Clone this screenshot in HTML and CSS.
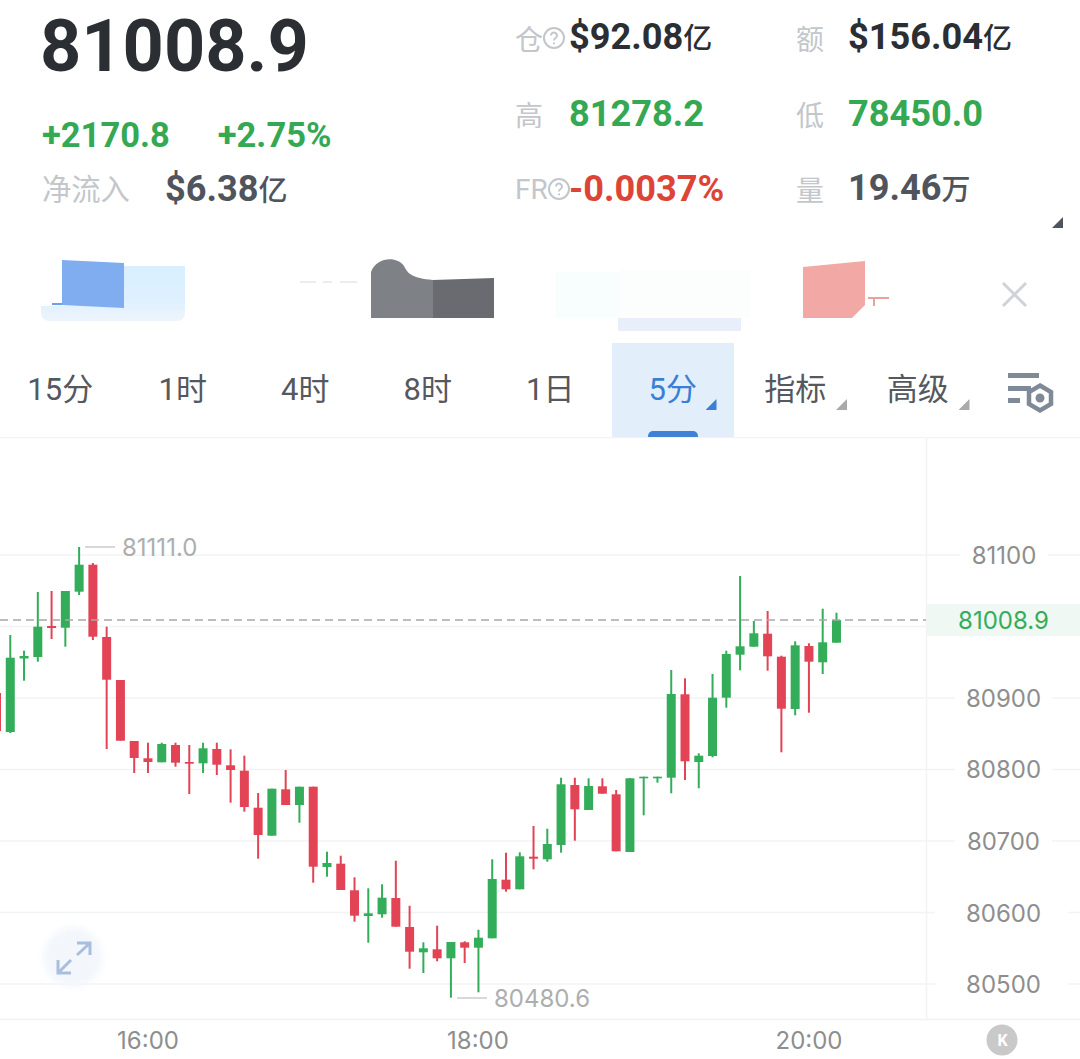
FILE: index.html
```html
<!DOCTYPE html>
<html lang="zh-CN">
<head>
    <meta charset="UTF-8">
    <meta name="viewport" content="width=device-width, initial-scale=1.0">
    <title>81008.9</title>
    <link rel="stylesheet" href="styles.css">
</head>
<body>

<div class="page">
    <div class="header">
        <div class="summary">
            <div class="price">81008.9</div>
            <div class="change">
                <span>+2170.8</span>
                <span>+2.75%</span>
            </div>
            <div class="inflow">
                <span class="label">净流入</span>
                <span class="value dark">$6.38<span class="unit">亿</span></span>
            </div>
        </div>
        <div class="stats">
            <div class="stat">
                <span class="label">仓<svg class="help" viewBox="0 0 24 24"><circle cx="12" cy="12" r="10"/><path d="M9 9.5a3 3 0 1 1 4.6 2.5c-1 .7-1.6 1.2-1.6 2.4"/><path d="M12 16.4v1.8"/></svg></span>
                <span class="value black">$92.08<span class="unit">亿</span></span>
            </div>
            <div class="stat wide">
                <span class="label">额</span>
                <span class="value black">$156.04<span class="unit">亿</span></span>
            </div>
            <div class="stat">
                <span class="label">高</span>
                <span class="value green">81278.2</span>
            </div>
            <div class="stat wide">
                <span class="label">低</span>
                <span class="value green">78450.0</span>
            </div>
            <div class="stat">
                <span class="label latin">FR<svg class="help" viewBox="0 0 24 24"><circle cx="12" cy="12" r="10"/><path d="M9 9.5a3 3 0 1 1 4.6 2.5c-1 .7-1.6 1.2-1.6 2.4"/><path d="M12 16.4v1.8"/></svg></span>
                <span class="value red">-0.0037%</span>
            </div>
            <div class="stat wide">
                <span class="label">量</span>
                <span class="value dark">19.46<span class="unit">万</span></span>
            </div>
        </div>
        <span class="corner"></span>
    </div>

    <svg class="banner" viewBox="0 254 1080 89">
        <defs>
            <linearGradient id="paleBlue" x1="0" y1="0" x2="0" y2="1">
                <stop offset="0" stop-color="#d9efff"/>
                <stop offset="0.6" stop-color="#ddf0fe"/>
                <stop offset="1" stop-color="#eef5fc"/>
            </linearGradient>
        </defs>
        <path d="M124 266H185V312Q185 321 176 321H50Q41 321 41 312V306L124 304Z" fill="url(#paleBlue)"/>
        <path d="M62 260L124 263V308L62 305Z" fill="#7fadf0"/>
        <path d="M52 304H62" stroke="#6f9fe6" stroke-width="2"/>
        <path d="M300 282H316M323 282H332M340 282H357" stroke="#ececec" stroke-width="2"/>
        <path d="M371 318V272C376 258 396 255 404 266C408 274 412 278 433 280V318Z" fill="#7e8186"/>
        <path d="M433 280L494 278V318H433Z" fill="#696b71"/>
        <rect x="555" y="272" width="65" height="46" fill="#f8fdfe"/>
        <rect x="620" y="270" width="130" height="48" fill="#fcfefe"/>
        <rect x="618" y="318" width="123" height="13" fill="#e8effb"/>
        <path d="M803 267L865 261V305L852 318H803Z" fill="#f2a8a5"/>
        <path d="M868 298H889M874 298V306" stroke="#e9a29e" stroke-width="2"/>
        <path d="M1003 283L1026 306M1026 283L1003 306" stroke="#cfd2d6" stroke-width="3"/>
    </svg>

    <div class="tabs">
        <div class="tab">15分</div>
        <div class="tab">1时</div>
        <div class="tab">4时</div>
        <div class="tab">8时</div>
        <div class="tab">1日</div>
        <div class="tab active">5分<span class="mark"></span></div>
        <div class="tab">指标<span class="mark"></span></div>
        <div class="tab">高级<span class="mark"></span></div>
        <div class="tab-icon">
            <svg viewBox="0 0 48 42" width="48" height="42">
                <path d="M0 2.5H31M0 15.5H23M0 27.5H12" stroke="#7f8a99" stroke-width="5"/>
                <path d="M32 12.5L43 19V31L32 37.5L21 31V19Z" fill="none" stroke="#7f8a99" stroke-width="4.5"/>
                <circle cx="32" cy="25" r="4.5" fill="#7f8a99"/>
            </svg>
        </div>
    </div>

    <svg class="chart" id="chart" viewBox="0 437 1080 622">
        <g stroke="#f2f3f5" stroke-width="1.5">
            <path d="M0 437.5H1080"/>
            <path d="M926.5 437V1020"/>
            <path d="M0 1019.5H1080"/>
            <path d="M0 555H960M1048 555H1080"/>
            <path d="M0 626.5H926"/>
            <path d="M0 698H955M1052 698H1080"/>
            <path d="M0 769.5H955M1052 769.5H1080"/>
            <path d="M0 841H955M1052 841H1080"/>
            <path d="M0 912.5H935M1068 912.5H1080"/>
            <path d="M0 984H935M1068 984H1080"/>
        </g>

        <g id="candles"></g>

        <path d="M0 620H926" stroke="#a8a8a8" stroke-width="1.5" stroke-dasharray="8 5"/>

        <path d="M85 547H115M457 998H487" stroke="#cccccc" stroke-width="1.5"/>
        <text class="mark-label" x="122" y="556">81111.0</text>
        <text class="mark-label" x="494" y="1007">80480.6</text>

        <rect x="927" y="604" width="153" height="32" fill="#eff8f2"/>
        <text class="tag-label" x="1003.5" y="629">81008.9</text>

        <g class="axis-y">
            <text x="1004" y="564">81100</text>
            <text x="1003.5" y="707">80900</text>
            <text x="1003.5" y="778">80800</text>
            <text x="1003.5" y="850">80700</text>
            <text x="1003.5" y="922">80600</text>
            <text x="1003.5" y="993">80500</text>
        </g>
        <g class="axis-x">
            <text x="148" y="1049">16:00</text>
            <text x="478" y="1049">18:00</text>
            <text x="809" y="1049">20:00</text>
        </g>

        <circle class="expand-bg" cx="73" cy="957" r="30"/>
        <path d="M77 955L90 943M77 943H90V955M71 960L58 973M58 960V973H71" fill="none" stroke="#a9bedd" stroke-width="3"/>

        <circle cx="1002" cy="1040" r="15.5" fill="#c9c9c9"/>
        <text class="k-label" x="1002.5" y="1046">K</text>
    </svg>
</div>

<script src="chart.js"></script>

</body>
</html>
```

FILE: styles.css
```css
html, body {
    margin: 0;
    background: #fff;
}
.page {
    width: 1080px;
    height: 1059px;
    overflow: hidden;
    font-family: Roboto, "Noto Sans CJK SC", sans-serif;
}
.header {
    position: relative;
    display: flex;
    height: 254px;
}
.summary {
    width: 474px;
    padding: 10px 0 0 42px;
    margin-right: -1px;
}
.price {
    margin-left: -2px;
    font-size: 72px;
    line-height: 74px;
    font-weight: 700;
    color: #2b2e33;
}
.change {
    display: flex;
    gap: 48px;
    margin-top: 31px;
    font-size: 34.5px;
    line-height: 40px;
    font-weight: 700;
    color: #34a853;
}
.inflow {
    display: flex;
    gap: 35px;
    margin-top: 14px;
    line-height: 40px;
}
.inflow .label {
    width: 88px;
    font-size: 29.3px;
}
.stats {
    display: grid;
    grid-template-columns: 281px auto;
    grid-auto-rows: 40px;
    row-gap: 35.5px;
    padding-top: 18px;
}
.stat {
    display: flex;
    align-items: center;
}
.label {
    display: flex;
    align-items: center;
    width: 54px;
    font-size: 28px;
    color: #c3c6ca;
    white-space: nowrap;
}
.stat.wide .label {
    width: 52px;
}
.label.latin {
    font-size: 28px;
}
.help {
    flex: none;
    width: 24px;
    height: 24px;
    margin-left: -1px;
    fill: none;
    stroke: #c3c6ca;
    stroke-width: 2;
}
.value {
    font-size: 36.2px;
    line-height: 40px;
    font-weight: 700;
    white-space: nowrap;
}
.unit {
    font-size: 29px;
    font-weight: 500;
}
.black { color: #2b2e33; }
.dark { color: #50545c; }
.green { color: #34a853; }
.red { color: #dd4438; }
.corner {
    position: absolute;
    left: 1052px;
    top: 217px;
    width: 11px;
    height: 11px;
    background: #50545c;
    clip-path: polygon(100% 0, 100% 100%, 0 100%);
}
.banner {
    display: block;
    width: 1080px;
    height: 89px;
}
.tabs {
    display: flex;
    height: 94px;
    margin-left: -1px;
}
.tab {
    position: relative;
    width: 122.5px;
    font-size: 31px;
    line-height: 94px;
    text-align: center;
    color: #55585e;
}
.tab .mark {
    position: absolute;
    left: 102px;
    top: 56px;
    width: 11px;
    height: 11px;
    background: #a9a9a9;
    clip-path: polygon(100% 0, 100% 100%, 0 100%);
}
.tab.active {
    background: #e3eefb;
    color: #3a7fd5;
}
.tab.active .mark {
    left: 94px;
    background: #3a7fd5;
}
.tab.active::after {
    content: "";
    position: absolute;
    left: 36px;
    bottom: 0;
    width: 50px;
    height: 6px;
    border-radius: 5px 5px 0 0;
    background: #3f80d8;
}
.tab-icon {
    padding: 30px 0 0 29px;
}
.tab-icon svg {
    display: block;
}
.chart {
    display: block;
    width: 1080px;
    height: 622px;
}
.chart text {
    font-family: Inter, sans-serif;
    font-size: 24px;
}
.axis-y text, .axis-x text {
    fill: #8e8e8e;
    text-anchor: middle;
}
.mark-label {
    fill: #aeaeae;
}
.chart .tag-label {
    fill: #34ad5a;
    text-anchor: middle;
}
.chart .k-label {
    font-family: Roboto, sans-serif;
    font-size: 16px;
    font-weight: 700;
    fill: #fff;
    text-anchor: middle;
}
.expand-bg {
    fill: #f3f7fc;
    filter: blur(3px);
}
```

FILE: chart.js
```js
// each candle: [up, high, bodyTop, bodyBottom, low], y in page pixels
const G = 1, R = 0;
const data = [
    [R, 693, 693, 731, 731],
    [G, 635, 657.7, 732, 733],
    [G, 650.7, 656, 658.5, 680.7],
    [G, 592, 626.7, 657, 661.7],
    [R, 591, 626, 628, 639],
    [G, 591, 591, 627.7, 646.7],
    [G, 547, 564.7, 591.7, 595],
    [R, 563, 564.7, 636.7, 640],
    [R, 626.7, 637, 679.7, 749],
    [R, 680, 680, 740.7, 740.7],
    [R, 741, 741, 758, 773],
    [R, 742.7, 758.3, 762, 773],
    [G, 742.7, 744, 762.3, 762.3],
    [R, 742.7, 745, 762.7, 766.7],
    [R, 745, 762, 763.7, 794],
    [G, 742.7, 748.3, 763.3, 773],
    [R, 742.7, 749, 764.7, 775],
    [R, 749.3, 765.3, 770, 802.7],
    [R, 755.7, 770.7, 807, 811.7],
    [R, 793, 807.7, 835, 858.7],
    [G, 788.7, 788.7, 835.7, 835.7],
    [R, 770, 789.3, 805, 805],
    [G, 786.7, 786.7, 805, 822.7],
    [R, 786.7, 786.7, 866.7, 882.7],
    [G, 851.7, 863, 867, 876.7],
    [R, 855.7, 863.7, 890, 890],
    [R, 877.3, 890.3, 915.7, 921.7],
    [G, 888.3, 913.3, 916, 942.7],
    [G, 884.3, 897.7, 914.3, 917.7],
    [R, 860.7, 898, 926.7, 926.7],
    [R, 905.7, 927, 951.7, 968.7],
    [G, 942.3, 948.3, 952.3, 973],
    [R, 925.7, 949.3, 958.3, 961.3],
    [G, 942, 942, 958.3, 997.7],
    [R, 941.3, 942.3, 947.7, 963],
    [G, 929.7, 937.7, 947.7, 992.3],
    [G, 859.3, 879, 938.3, 938.3],
    [R, 852.7, 879.7, 889.3, 891.7],
    [G, 852.3, 856.3, 889.3, 889.3],
    [R, 826, 856.7, 858.7, 869.3],
    [G, 828.7, 844, 859.3, 861.7],
    [G, 777.7, 784.3, 845, 852.7],
    [R, 777.7, 785, 809.3, 840.7],
    [G, 778.3, 786, 810, 810],
    [R, 778.3, 786.3, 793.7, 793.7],
    [R, 790, 794.3, 851.3, 851.3],
    [G, 778, 778.3, 852, 852],
    [G, 776.7, 776.7, 778.3, 815.3],
    [G, 776.7, 776.7, 778.3, 782.7],
    [G, 670, 694, 777.7, 793.3],
    [R, 678.3, 694.3, 761.3, 780],
    [G, 753.3, 755.7, 762, 788.3],
    [G, 674, 697.7, 756, 757.3],
    [G, 650.7, 654, 697.7, 707.7],
    [G, 576, 646.3, 654.7, 670.3],
    [G, 621, 633.3, 646.7, 646.7],
    [R, 611, 633.7, 656.3, 670.7],
    [R, 655.7, 656.7, 708.7, 752.3],
    [G, 641.3, 645.3, 709, 715.3],
    [R, 643.3, 646, 661.7, 712.7],
    [G, 608.7, 642.3, 662.3, 674],
    [G, 612.7, 620, 642.7, 642.7]
];

const NS = 'http://www.w3.org/2000/svg';
const group = document.getElementById('candles');

function addRect(x, y, w, h, color) {
    const rect = document.createElementNS(NS, 'rect');
    rect.setAttribute('x', x);
    rect.setAttribute('y', y);
    rect.setAttribute('width', w);
    rect.setAttribute('height', h);
    rect.setAttribute('fill', color);
    group.appendChild(rect);
}

data.forEach((c, i) => {
    const x = -3.5 + 13.77 * i;
    const color = c[0] === G ? '#34ad5a' : '#e24455';
    addRect(x - 1, c[1], 2, c[4] - c[1], color);
    addRect(x - 4.5, c[2], 9, c[3] - c[2], color);
});
```
